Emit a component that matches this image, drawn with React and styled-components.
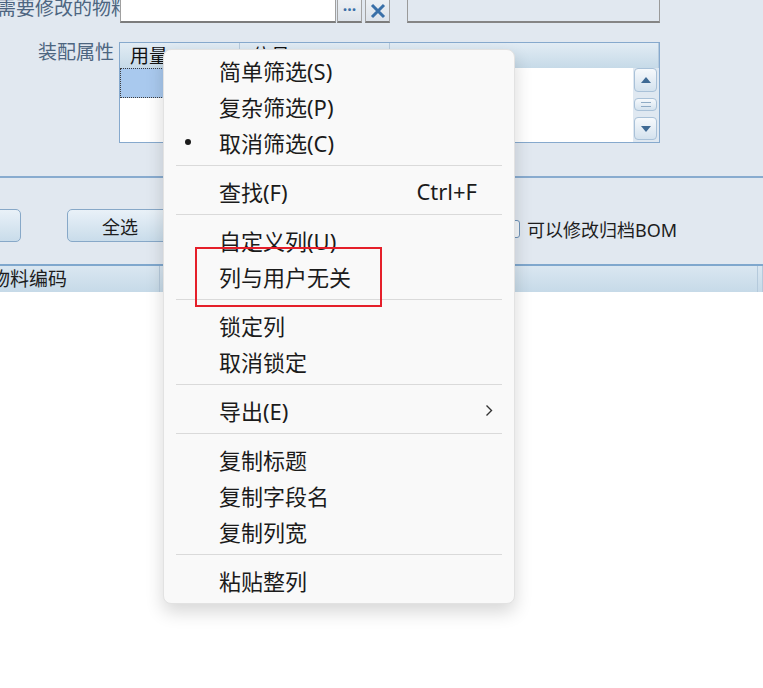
import React from 'react'
import styled, { createGlobalStyle } from 'styled-components'

const GlobalStyle = createGlobalStyle`
  html, body {
    margin: 0;
    padding: 0;
    background: #ffffff;
  }
  * {
    box-sizing: border-box;
  }
`

const cjk = `"Noto Sans", "Noto Sans CJK SC", sans-serif`

const Page = styled.div`
  position: relative;
  width: 763px;
  height: 688px;
  overflow: hidden;
  background: #ffffff;
  font-family: ${cjk};
`

const FormPanel = styled.div`
  height: 176px;
  background: #e1e8f0;
  display: flex;
  flex-direction: column;
`

const FieldRow = styled.div`
  display: flex;
  align-items: stretch;
  height: 29px;
  margin-top: -6px;
`

const FieldLabel = styled.div`
  flex: none;
  margin-left: -3px;
  margin-right: -10px;
  font-size: 19px;
  line-height: 29px;
  color: #4d6580;
  white-space: nowrap;
`

const TextInput = styled.div`
  position: relative;
  width: 216px;
  background: #ffffff;
  border: 1px solid #a0a0a0;
  border-bottom: 2px solid #7c7c7c;
`

const PickButton = styled.div`
  width: 25px;
  margin-left: ${(p) => p.$gap || 1}px;
  display: flex;
  align-items: flex-end;
  justify-content: center;
  padding-bottom: 2px;
  background: linear-gradient(#f0f3f6, #dde3ea);
  border: 1px solid #a3a3a3;
  border-bottom: 2px solid #7c7c7c;
  color: #3a70a8;
  font-weight: bold;
  font-size: 16px;
  line-height: 20px;
`

const InfoBox = styled.div`
  width: 253px;
  margin-left: 17px;
  border: 1px solid #9a9a9a;
  border-bottom: 2px solid #858585;
`

const AttrRow = styled.div`
  display: flex;
  margin-top: 19px;
`

const AttrLabel = styled.div`
  width: 114px;
  margin-right: 5px;
  text-align: right;
  font-size: 19px;
  line-height: 20px;
  color: #4d6580;
`

const GridBox = styled.div`
  width: 541px;
  height: 101px;
  border: 1px solid #86a9cd;
  background: #ffffff;
  display: flex;
  flex-direction: column;
`

const GridHead = styled.div`
  display: grid;
  grid-template-columns: 120px 150px 1fr;
  height: 25px;
  background: linear-gradient(#e2ecf4, #c6dae8);
`

const HeadCell = styled.div`
  padding-left: ${(p) => p.$pad || 10}px;
  border-right: 1px solid #b6cbde;
  font-size: 19px;
  line-height: 26px;
  color: #111;
  white-space: nowrap;
  overflow: hidden;
`

const GridBody = styled.div`
  flex: 1;
  display: flex;
`

const Rows = styled.div`
  flex: 1;
`

const SelectedCell = styled.div`
  width: 120px;
  height: 30px;
  background: #a9c9ee;
  border: 1px dotted #3d3d3d;
`

const ScrollTrack = styled.div`
  width: 26px;
  padding: 0 2px 2px 1px;
  display: flex;
  flex-direction: column;
  justify-content: space-between;
  background: #dfe8f1;
`

const ScrollButton = styled.div`
  height: ${(p) => p.$h}px;
  border: 1px solid #a9c1d8;
  border-radius: 4px;
  background: linear-gradient(#f6f9fc, #d4e2ee);
  display: flex;
  align-items: center;
  justify-content: center;
`

const ButtonBar = styled.div`
  height: 88px;
  border-top: 2px solid #88abcf;
  background: #e1e8f0;
  display: flex;
  align-items: flex-start;
  padding-top: 31px;
`

const ActionButton = styled.div`
  width: 106px;
  height: 33px;
  margin-left: ${(p) => p.$ml}px;
  padding-right: ${(p) => p.$pr || 0}px;
  border: 1px solid #87a8c8;
  border-radius: 5px;
  background: linear-gradient(#e9f1f8, #c9dcea);
  display: flex;
  align-items: center;
  justify-content: center;
  font-size: 18px;
  color: ${(p) => (p.$disabled ? '#8a9aac' : '#1d1d1d')};
  white-space: nowrap;
`

const CheckOption = styled.label`
  display: flex;
  align-items: center;
  margin-left: 331px;
  margin-top: 7px;
  font-size: 18px;
  color: #1d1d1d;
  white-space: nowrap;
`

const CheckBox = styled.span`
  width: 16px;
  height: 18px;
  margin-right: 7px;
  border: 1px solid #6f93b8;
  border-radius: 3px;
  background: #f4f7fa;
`

const ListHead = styled.div`
  display: grid;
  grid-template-columns: 160px 598px 1fr;
  height: 28px;
  border-top: 2px solid #7fa7cd;
  background: linear-gradient(#dae7f1, #c6dae8);
`

const ListHeadCell = styled.div`
  border-right: 1px solid #b5cadc;
  font-size: 19px;
  line-height: 26px;
  color: #1d1d1d;
  white-space: nowrap;
  overflow: hidden;
  text-indent: ${(p) => p.$indent || 0}px;
`

const Menu = styled.div`
  position: absolute;
  left: 163px;
  top: 49px;
  width: 352px;
  padding: 2px 0 5px;
  background: #f9f9f9;
  border: 1px solid #e2e2e2;
  border-radius: 8px;
  box-shadow: 0 8px 18px rgba(0, 0, 0, 0.16);
`

const MenuItem = styled.div`
  display: grid;
  grid-template-columns: 55px 1fr auto 37px;
  align-items: center;
  height: 36px;
  font-size: 22px;
  color: #1b1b1b;
`

const Bullet = styled.span`
  width: 6px;
  height: 6px;
  margin-left: 21px;
  border-radius: 50%;
  background: #1b1b1b;
`

const Shortcut = styled.span`
  font-size: 22px;
`

const Chevron = styled.span`
  padding-left: 8px;
  display: flex;
`

const Separator = styled.div`
  height: 1px;
  margin: 5px 12px 7px;
  background: #dadada;
`

const Highlight = styled.div`
  position: absolute;
  left: 195px;
  top: 247px;
  width: 187px;
  height: 60px;
  border: 2px solid #e51f2a;
`

const menu = [
  [{ text: '简单筛选(S)' }, { text: '复杂筛选(P)' }, { text: '取消筛选(C)', checked: true }],
  [{ text: '查找(F)', shortcut: 'Ctrl+F' }],
  [{ text: '自定义列(U)' }, { text: '列与用户无关' }],
  [{ text: '锁定列' }, { text: '取消锁定' }],
  [{ text: '导出(E)', sub: true }],
  [{ text: '复制标题' }, { text: '复制字段名' }, { text: '复制列宽' }],
  [{ text: '粘贴整列' }],
]

const App = () => {
  return (
    <Page>
      <GlobalStyle />
      <FormPanel>
        <FieldRow>
          <FieldLabel>需要修改的物料</FieldLabel>
          <TextInput />
          <PickButton>···</PickButton>
          <PickButton $gap={3}>
            <svg width='16' height='16' viewBox='0 0 16 16'>
              <path d='M2 2 L14 14 M14 2 L2 14' stroke='#3a70a8' strokeWidth='3' />
            </svg>
          </PickButton>
          <InfoBox />
        </FieldRow>
        <AttrRow>
          <AttrLabel>装配属性</AttrLabel>
          <GridBox>
            <GridHead>
              <HeadCell>用量</HeadCell>
              <HeadCell $pad={12}>位号</HeadCell>
              <HeadCell />
            </GridHead>
            <GridBody>
              <Rows>
                <SelectedCell />
              </Rows>
              <ScrollTrack>
                <ScrollButton $h={24}>
                  <svg width='10' height='6' viewBox='0 0 10 6'>
                    <path d='M0 6 L5 0 L10 6 Z' fill='#3f6a94' />
                  </svg>
                </ScrollButton>
                <ScrollButton $h={13}>
                  <svg width='10' height='5' viewBox='0 0 10 5'>
                    <path d='M0 0.5 H10 M0 4.5 H10' stroke='#8fabc5' strokeWidth='1' />
                  </svg>
                </ScrollButton>
                <ScrollButton $h={23}>
                  <svg width='10' height='6' viewBox='0 0 10 6'>
                    <path d='M0 0 L5 6 L10 0 Z' fill='#3f6a94' />
                  </svg>
                </ScrollButton>
              </ScrollTrack>
            </GridBody>
          </GridBox>
        </AttrRow>
      </FormPanel>
      <ButtonBar>
        <ActionButton $ml={-85} $pr={34} $disabled>
          取消全选
        </ActionButton>
        <ActionButton $ml={46}>全选</ActionButton>
        <CheckOption>
          <CheckBox />
          可以修改归档BOM
        </CheckOption>
      </ButtonBar>
      <ListHead>
        <ListHeadCell $indent={-9}>物料编码</ListHeadCell>
        <ListHeadCell />
        <ListHeadCell />
      </ListHead>

      <Menu>
        {menu.map((group, gi) => (
          <React.Fragment key={gi}>
            {gi > 0 && <Separator />}
            {group.map((item) => (
              <MenuItem key={item.text}>
                {item.checked ? <Bullet /> : <span />}
                <span>{item.text}</span>
                {item.shortcut ? <Shortcut>{item.shortcut}</Shortcut> : <span />}
                {item.sub ? (
                  <Chevron>
                    <svg width='8' height='13' viewBox='0 0 8 13'>
                      <path d='M1.5 1.5 L6.5 6.5 L1.5 11.5' fill='none' stroke='#333' strokeWidth='1.4' />
                    </svg>
                  </Chevron>
                ) : (
                  <span />
                )}
              </MenuItem>
            ))}
          </React.Fragment>
        ))}
      </Menu>
      <Highlight />
    </Page>
  )
}

export default App
